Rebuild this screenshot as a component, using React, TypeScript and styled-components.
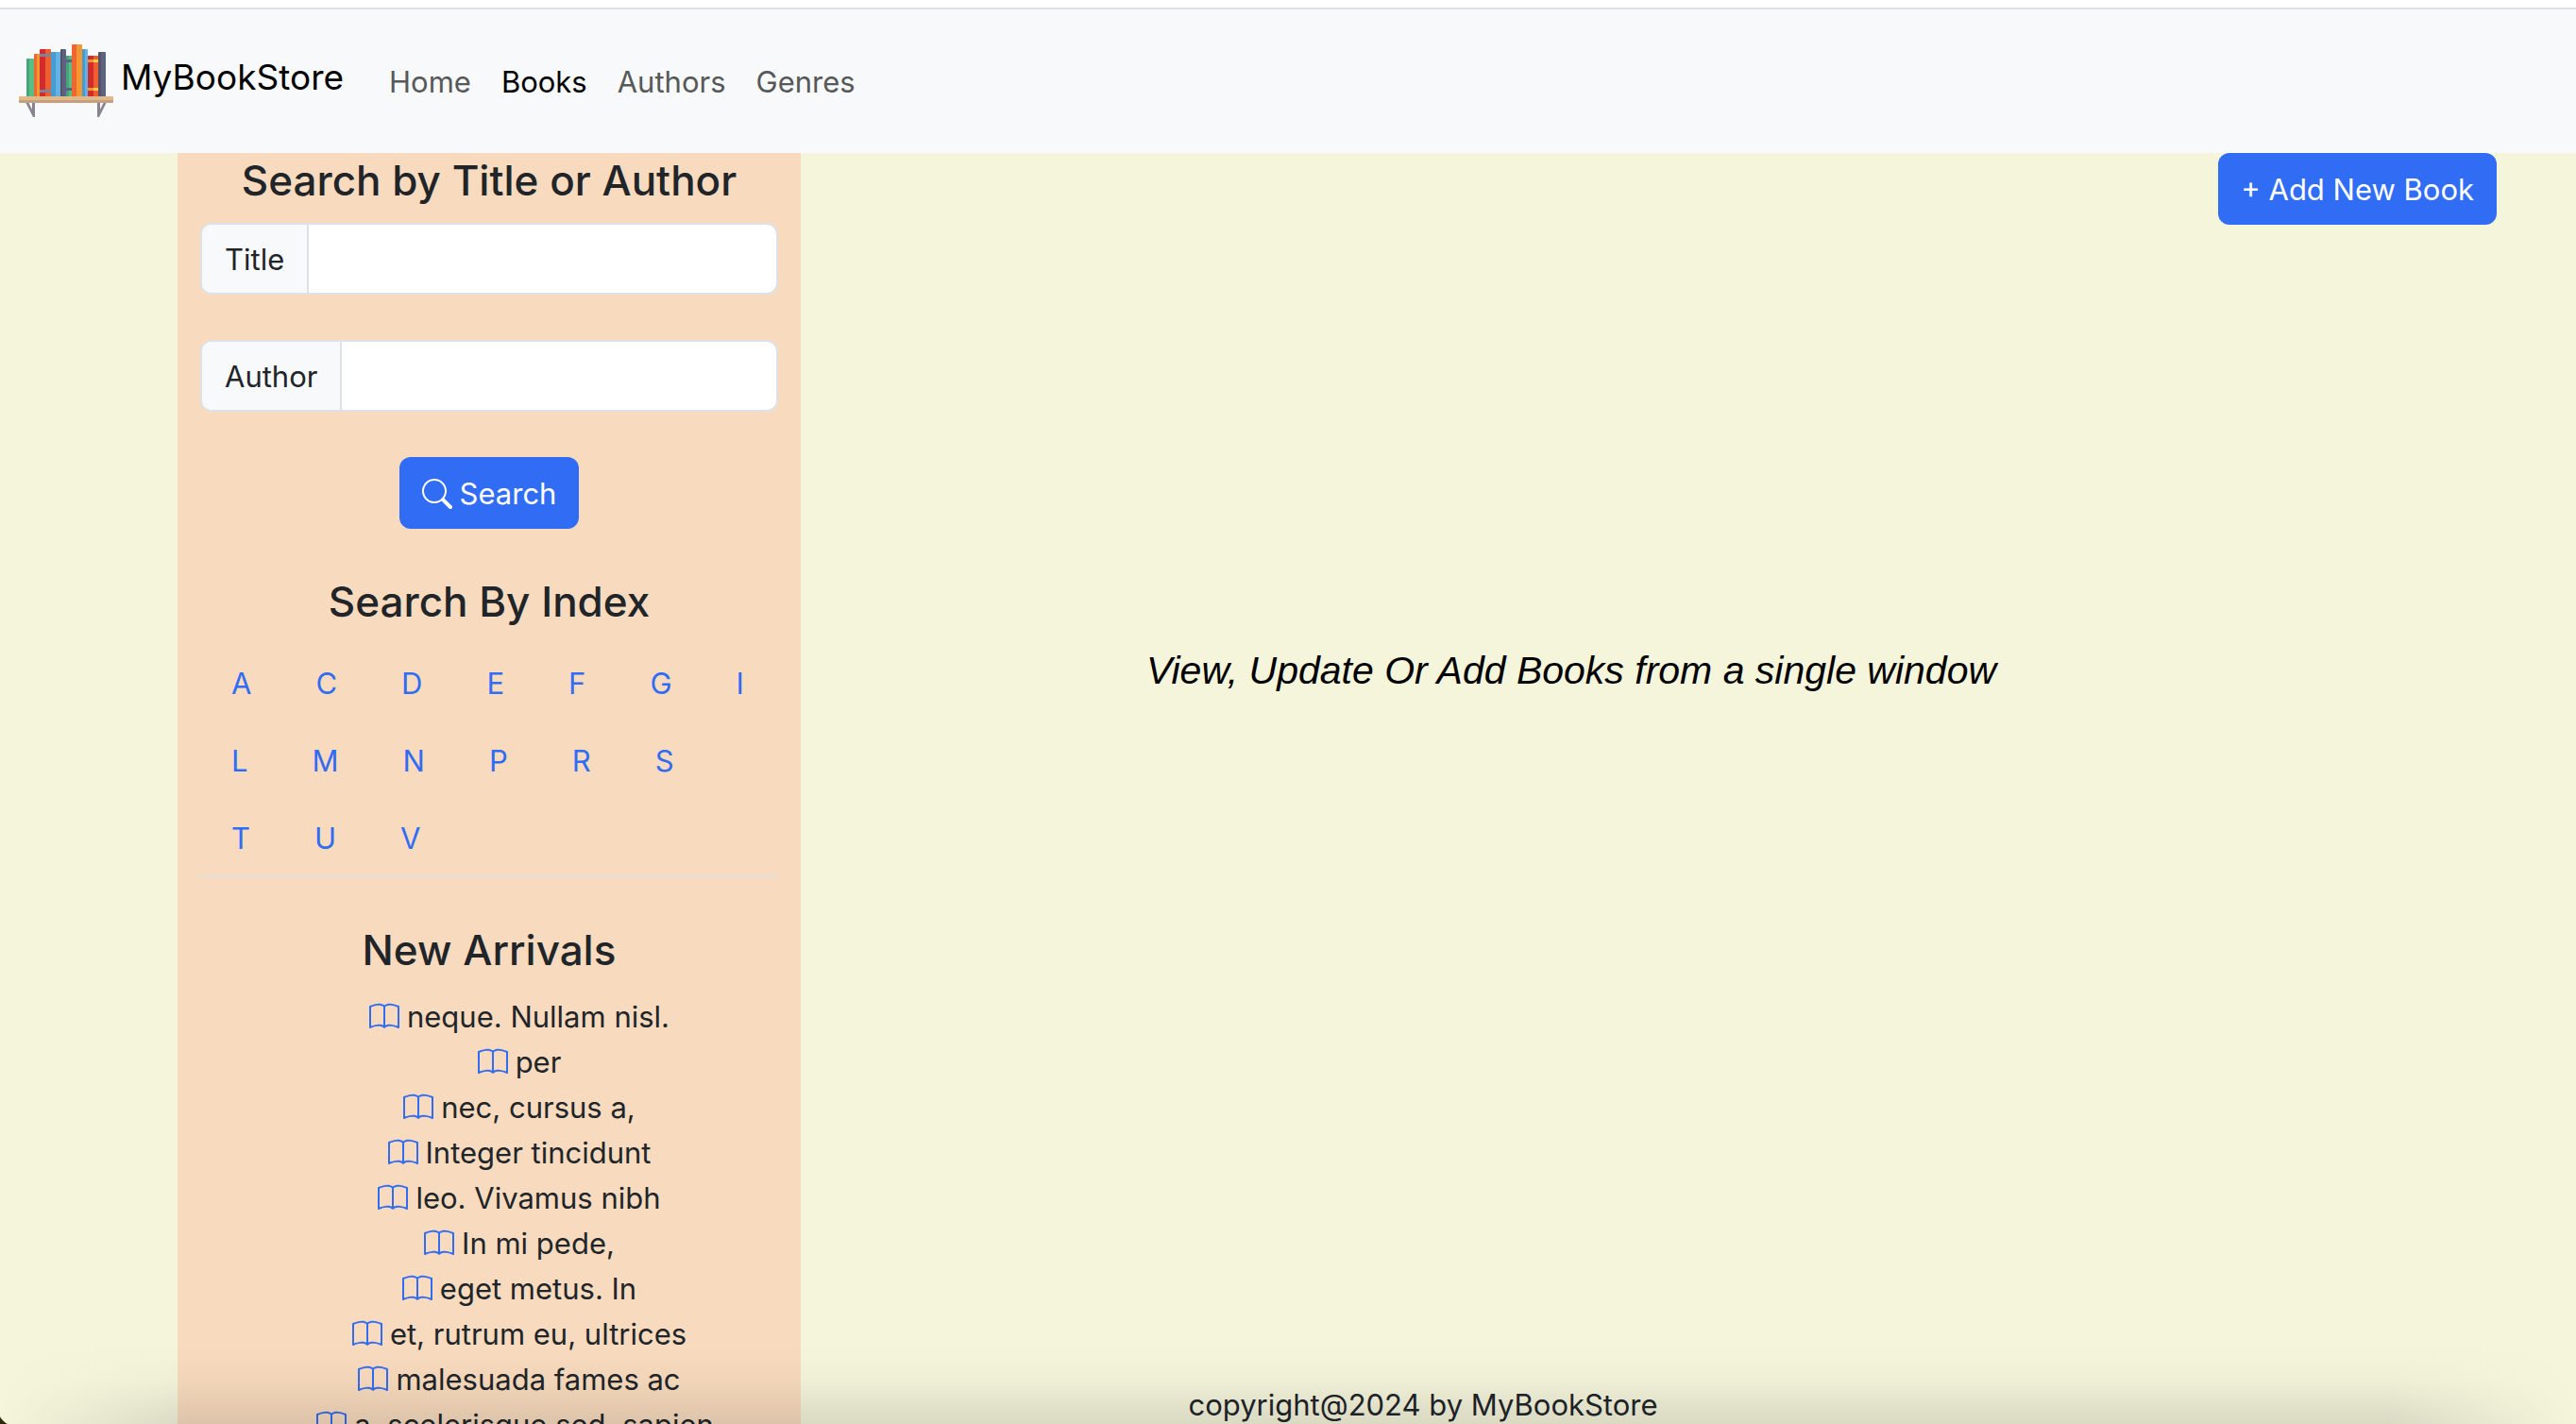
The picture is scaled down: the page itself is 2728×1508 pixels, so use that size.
import React from "react";
import styled, { createGlobalStyle, css } from "styled-components";

const Global = createGlobalStyle`
  *, *::before, *::after { box-sizing: border-box; }
  html, body { margin: 0; height: 100%; }
  #root { height: 100%; }
  body {
    background: #f5f5dc;
    color: #212529;
    font-family: Inter, "Liberation Sans", sans-serif;
    font-size: 31px;
    line-height: 48px;
    overflow: hidden;
  }
`;

const Page = styled.div`
  position: relative;
  height: 100vh;
  overflow: hidden;
`;

const Header = styled.header`
  background: #f8f9fa;
  border-top: 8px solid #ffffff;
`;

const Navbar = styled.nav`
  display: flex;
  align-items: center;
  height: 154px;
  padding: 0 20px;
  border-top: 2px solid #e0e0e0;
`;

const Brand = styled.a`
  display: flex;
  align-items: center;
  gap: 8px;
  margin-right: 48px;
  padding-bottom: 8px;
  color: #000000;
  font-size: 37px;
  text-decoration: none;

  svg {
    width: 100px;
    height: 100px;
  }
`;

const NavList = styled.ul`
  display: flex;
  gap: 32px;
  margin: 0;
  padding: 2px 0 0;
  list-style: none;
`;

const NavLink = styled.a<{ $active?: boolean }>`
  color: ${(p) => (p.$active ? "#000000" : "#575859")};
  text-decoration: none;
`;

const Columns = styled.main`
  display: flex;
  align-items: flex-start;
  padding: 0 84px 0 188px;
`;

const Sidebar = styled.aside`
  flex: 0 0 660px;
  min-width: 0;
  padding: 0 24px;
  background: #f8dbbe;
`;

const Heading = styled.h3`
  margin: 0 0 16px;
  font-size: 44px;
  font-weight: 500;
  line-height: 58px;
  text-align: center;
`;

const SearchForm = styled.form`
  display: flex;
  flex-direction: column;
  align-items: center;
  gap: 48px;
  margin-bottom: 48px;
`;

const Field = styled.div`
  display: flex;
  width: 100%;
  height: 76px;
  overflow: hidden;
  border: 2px solid #dee2e6;
  border-radius: 12px;
  background: #ffffff;
`;

const FieldLabel = styled.label`
  display: flex;
  align-items: center;
  padding: 2px 24px 0;
  border-right: 2px solid #dee2e6;
  background: #f8f9fa;
`;

const FieldInput = styled.input`
  flex: 1;
  min-width: 0;
  padding: 0 24px;
  border: 0;
  outline: 0;
  background: transparent;
  color: inherit;
  font: inherit;
`;

const Button = styled.button`
  display: flex;
  align-items: center;
  gap: 8px;
  height: 76px;
  padding: 2px 24px 0;
  border: 0;
  border-radius: 12px;
  background: #316cf4;
  color: #ffffff;
  font: inherit;
  white-space: nowrap;
`;

const iconSize = css`
  flex: none;
  width: 32px;
  height: 32px;
`;

const SearchSvg = styled.svg`
  ${iconSize}
`;

const BookSvg = styled.svg`
  ${iconSize}
  color: #316cf4;
`;

const IndexList = styled.ul`
  display: flex;
  flex-wrap: wrap;
  gap: 34px 20px;
  margin: 0;
  padding: 18px 9px 15px;
  list-style: none;
`;

const IndexLink = styled.a`
  display: block;
  padding: 0 24px;
  color: #316cf4;
  text-decoration: none;
`;

const Rule = styled.hr`
  height: 2px;
  margin: 0 0 48px;
  border: 0;
  background: #e0e0e0;
`;

const Arrivals = styled.ul`
  margin: 0;
  padding: 2px 0 0 64px;
  list-style: none;
`;

const Arrival = styled.li`
  display: flex;
  align-items: center;
  justify-content: center;
  gap: 8px;
  white-space: nowrap;
`;

const Content = styled.section`
  display: flex;
  flex: 1;
  flex-direction: column;
  align-items: flex-end;
`;

const Tagline = styled.p`
  align-self: center;
  margin: 448px 0 0;
  padding-right: 164px;
  color: #000000;
  font-family: "Liberation Sans", Arial, sans-serif;
  font-size: 41px;
  font-style: italic;
`;

const Footer = styled.footer`
  position: absolute;
  right: 0;
  bottom: -4px;
  left: 286px;
  text-align: center;
`;

const BottomShade = styled.div`
  position: absolute;
  right: 0;
  bottom: 0;
  left: 0;
  height: 84px;
  background: linear-gradient(to bottom, rgba(0, 0, 0, 0), rgba(0, 0, 0, 0.025) 45%, rgba(0, 0, 0, 0.11));
  mask-image: linear-gradient(to right, transparent, #000 200px, #000 calc(100% - 200px), transparent);
  pointer-events: none;
`;

const WindowCorner = styled.div`
  position: absolute;
  bottom: 0;
  left: 0;
  width: 20px;
  height: 20px;
  background: radial-gradient(circle at 20px 0, transparent 23px, #2e2708 24px);
  pointer-events: none;
`;

const ShelfLogo = () => (
  <svg viewBox="0 -9 100 100" aria-hidden="true">
    <path d="M7 67l8 16h2V67h-3v8l-4-8z" fill="#898391" />
    <path d="M93 67l-8 16h-2V67h3v8l4-8z" fill="#898391" />
    <rect x="8" y="21" width="4" height="41" rx="1" fill="#4aa27d" />
    <rect x="11" y="21" width="5" height="41" rx="1" fill="#57be84" />
    <rect x="16" y="16" width="4" height="46" rx="1" fill="#ef6631" />
    <rect x="19" y="16" width="3" height="46" fill="#f49733" />
    <rect x="22" y="11" width="7" height="51" rx="1" fill="#d12b2c" />
    <rect x="28" y="11" width="6" height="51" rx="1" fill="#ef5e30" />
    <path d="M22 16h12v3H22zM22 54h12v3H22z" fill="#82819a" />
    <rect x="34" y="14" width="6" height="48" rx="1" fill="#469bcf" />
    <rect x="39" y="14" width="5" height="48" fill="#63b2e5" />
    <rect x="44" y="11" width="3" height="51" rx="1" fill="#5a5067" />
    <rect x="46" y="11" width="4" height="51" rx="1" fill="#5c637f" />
    <rect x="50" y="18" width="3" height="44" fill="#4aa27d" />
    <rect x="53" y="18" width="3" height="44" fill="#57be84" />
    <path d="M50 22h6v3h-6zM50 52h6v3h-6z" fill="#5c6380" />
    <rect x="56" y="6" width="6" height="56" rx="1" fill="#ef6631" />
    <rect x="61" y="6" width="6" height="56" rx="1" fill="#f49733" />
    <rect x="67" y="11" width="3" height="51" fill="#469bcf" />
    <rect x="70" y="11" width="3" height="51" rx="1" fill="#63b2e5" />
    <rect x="73" y="18" width="6" height="44" fill="#d12b2c" />
    <rect x="79" y="18" width="6" height="44" fill="#ef5e30" />
    <path d="M73 22h6v3h-6zM73 52h6v3h-6z" fill="#f49733" />
    <path d="M79 22h6v3h-6zM79 52h6v3h-6z" fill="#ffd041" />
    <rect x="84" y="14" width="4" height="48" rx="1" fill="#5a5067" />
    <rect x="87" y="14" width="5" height="48" rx="1" fill="#5c637f" />
    <rect y="61" width="100" height="7" rx="1" fill="#dfb98a" />
    <path d="M0 65h100v2l-1 1H1l-1-1z" fill="#c5a07e" />
  </svg>
);

const SearchIcon = () => (
  <SearchSvg viewBox="0 0 16 16" fill="currentColor" aria-hidden="true">
    <path d="M11.742 10.344a6.5 6.5 0 1 0-1.397 1.398h-.001q.044.06.098.115l3.85 3.85a1 1 0 0 0 1.415-1.414l-3.85-3.85a1 1 0 0 0-.115-.1zM12 6.5a5.5 5.5 0 1 1-11 0 5.5 5.5 0 0 1 11 0" />
  </SearchSvg>
);

const BookIcon = () => (
  <BookSvg viewBox="0 0 16 16" fill="currentColor" aria-hidden="true">
    <path d="M1 2.828c.885-.37 2.154-.769 3.388-.893 1.33-.134 2.458.063 3.112.752v9.746c-.935-.53-2.12-.603-3.213-.493-1.18.12-2.37.461-3.287.811zm7.5-.141c.654-.689 1.782-.886 3.112-.752 1.234.124 2.503.523 3.388.893v9.923c-.918-.35-2.107-.692-3.287-.81-1.094-.111-2.278-.039-3.213.492zM8 1.783C7.015.936 5.587.81 4.287.94c-1.514.153-3.042.672-3.994 1.105A.5.5 0 0 0 0 2.5v11a.5.5 0 0 0 .707.455c.882-.4 2.303-.881 3.68-1.02 1.409-.142 2.59.087 3.223.877a.5.5 0 0 0 .78 0c.633-.79 1.814-1.019 3.222-.877 1.378.139 2.8.62 3.681 1.02A.5.5 0 0 0 16 13.5v-11a.5.5 0 0 0-.293-.455c-.952-.433-2.48-.952-3.994-1.105C10.413.809 8.985.936 8 1.783" />
  </BookSvg>
);

const navItems = ["Home", "Books", "Authors", "Genres"];
const letters = ["A", "C", "D", "E", "F", "G", "I", "L", "M", "N", "P", "R", "S", "T", "U", "V"];
const arrivals = [
  "neque. Nullam nisl.",
  "per",
  "nec, cursus a,",
  "Integer tincidunt",
  "leo. Vivamus nibh",
  "In mi pede,",
  "eget metus. In",
  "et, rutrum eu, ultrices",
  "malesuada fames ac",
  "a, scelerisque sed, sapien.",
];

export default function App() {
  return (
    <Page>
      <Global />
      <Header>
        <Navbar>
          <Brand href="#">
            <ShelfLogo />
            MyBookStore
          </Brand>
          <NavList>
            {navItems.map((item) => (
              <li key={item}>
                <NavLink href="#" $active={item === "Books"}>
                  {item}
                </NavLink>
              </li>
            ))}
          </NavList>
        </Navbar>
      </Header>
      <Columns>
        <Sidebar>
          <Heading>Search by Title or Author</Heading>
          <SearchForm onSubmit={(e) => e.preventDefault()}>
            <Field>
              <FieldLabel htmlFor="title">Title</FieldLabel>
              <FieldInput id="title" type="text" />
            </Field>
            <Field>
              <FieldLabel htmlFor="author">Author</FieldLabel>
              <FieldInput id="author" type="text" />
            </Field>
            <Button type="submit">
              <SearchIcon />
              Search
            </Button>
          </SearchForm>
          <Heading>Search By Index</Heading>
          <IndexList>
            {letters.map((letter) => (
              <li key={letter}>
                <IndexLink href="#">{letter}</IndexLink>
              </li>
            ))}
          </IndexList>
          <Rule />
          <Heading>New Arrivals</Heading>
          <Arrivals>
            {arrivals.map((title) => (
              <Arrival key={title}>
                <BookIcon />
                {title}
              </Arrival>
            ))}
          </Arrivals>
        </Sidebar>
        <Content>
          <Button type="button">+ Add New Book</Button>
          <Tagline>View, Update Or Add Books from a single window</Tagline>
        </Content>
      </Columns>
      <Footer>copyright@2024 by MyBookStore</Footer>
      <BottomShade />
      <WindowCorner />
    </Page>
  );
}
